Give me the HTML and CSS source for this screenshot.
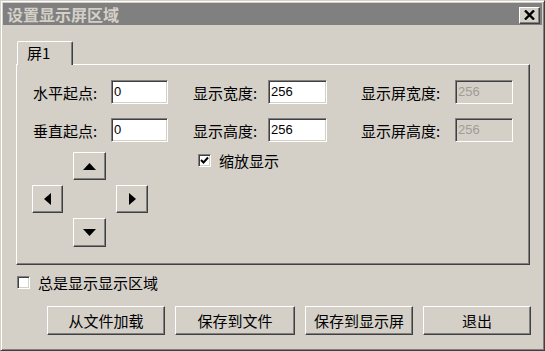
FILE: index.html
```html
<!DOCTYPE html>
<html lang="zh-CN">
<head>
<meta charset="utf-8">
<title>设置显示屏区域</title>
<link rel="stylesheet" href="styles.css">
</head>
<body>
<div class="window">
  <div class="titlebar">
    <span class="title">设置显示屏区域</span>
    <div class="close">
      <svg width="11" height="10" viewBox="0 0 11 10"><path d="M1 0.5 L10 9.5 M10 0.5 L1 9.5" stroke="#000" stroke-width="2.4" fill="none"/></svg>
    </div>
  </div>
  <div class="client">
    <div class="tabs"><div class="tab">屏1</div></div>
    <div class="panel">
      <div class="fields">
        <span class="lbl">水平起点:</span>
        <div class="edit w57">0</div>
        <span class="lbl">显示宽度:</span>
        <div class="edit w59">256</div>
        <span class="lbl">显示屏宽度:</span>
        <div class="edit w58 disabled">256</div>

        <span class="lbl">垂直起点:</span>
        <div class="edit w57">0</div>
        <span class="lbl">显示高度:</span>
        <div class="edit w59">256</div>
        <span class="lbl">显示屏高度:</span>
        <div class="edit w58 disabled">256</div>
      </div>
      <div class="lower">
        <div class="pad">
          <div class="btn arrow up"><svg width="13" height="7" viewBox="0 0 13 7"><polygon points="0,7 13,7 6.5,0" fill="#000"/></svg></div>
          <div class="btn arrow left"><svg width="7" height="12" viewBox="0 0 7 12"><polygon points="7,0 7,12 0,6" fill="#000"/></svg></div>
          <div class="btn arrow right"><svg width="7" height="12" viewBox="0 0 7 12"><polygon points="0,0 0,12 7,6" fill="#000"/></svg></div>
          <div class="btn arrow down"><svg width="13" height="7" viewBox="0 0 13 7"><polygon points="0,0 13,0 6.5,7" fill="#000"/></svg></div>
        </div>
        <div class="check zoom">
          <span class="box"><svg width="9" height="9" viewBox="0 0 9 9"><path d="M1 4 L3.5 6.5 L8 1.5" stroke="#000" stroke-width="2" fill="none"/></svg></span>
          <span class="ctext">缩放显示</span>
        </div>
      </div>
    </div>
    <div class="check always">
      <span class="box"></span>
      <span class="ctext">总是显示显示区域</span>
    </div>
    <div class="buttons">
      <div class="btn push b1">从文件加载</div>
      <div class="btn push b2">保存到文件</div>
      <div class="btn push b3">保存到显示屏</div>
      <div class="btn push b4">退出</div>
    </div>
  </div>
</div>
</body>
</html>
```
FILE: styles.css
```css
* { box-sizing: border-box; }
html, body { margin: 0; padding: 0; background: #d4d0c8; }
body {
  font-family: "Noto Sans CJK SC", "Liberation Sans", sans-serif;
  font-size: 15px;
  color: #000;
}
.window {
  width: 545px;
  height: 351px;
  background: #d4d0c8;
  border: 1px solid;
  border-color: #d4d0c8 #404040 #404040 #d4d0c8;
  box-shadow: inset 1px 1px #fff, inset -1px -1px #808080;
  padding: 2px;
}
.titlebar {
  height: 22px;
  background: #808080;
  display: flex;
  align-items: center;
  justify-content: space-between;
  padding-left: 4px;
  padding-right: 2px;
}
.title {
  font-weight: bold;
  font-size: 16px;
  line-height: 22px;
  color: #d4d0c8;
}
.close {
  width: 21px;
  height: 17px;
  margin-top: 2px;
  background: #d4d0c8;
  border: 1px solid;
  border-color: #fff #404040 #404040 #fff;
  box-shadow: inset -1px -1px #808080;
  display: flex;
  align-items: center;
  justify-content: center;
}
.client {
  padding-top: 16px;
  padding-left: 13px;
}
.tabs {
  display: flex;
  position: relative;
  z-index: 1;
}
.tab {
  margin-left: 1px;
  width: 56px;
  height: 24px;
  margin-bottom: -1px;
  background: #d4d0c8;
  border-top: 1px solid #fff;
  border-left: 1px solid #fff;
  border-right: 1px solid #404040;
  box-shadow: inset -1px 0 #808080;
  border-radius: 2px 2px 0 0;
  padding-left: 9px;
  line-height: 22px;
  font-size: 15px;
}
.panel {
  width: 514px;
  height: 201px;
  border: 1px solid;
  border-color: #fff #404040 #404040 #fff;
  box-shadow: inset -1px -1px #808080;
  padding: 15px 0 0 16px;
}
.fields {
  display: grid;
  grid-template-columns: 78px 82px 75px 93px 94px 58px;
  grid-auto-rows: 24px;
  row-gap: 14px;
  align-items: center;
}
.lbl {
  font-size: 15px;
  line-height: 17px;
  white-space: nowrap;
}
.edit {
  height: 24px;
  background: #fff;
  border: 1px solid;
  border-color: #808080 #fff #fff #808080;
  box-shadow: inset 1px 1px #404040, inset -1px -1px #d4d0c8;
  font-family: "Liberation Sans", "DejaVu Sans", sans-serif;
  font-size: 13px;
  line-height: 20px;
  padding-left: 2px;
  padding-top: 1px;
}
.w57 { width: 57px; }
.w59 { width: 59px; }
.w58 { width: 58px; }
.edit.disabled { background: #d4d0c8; color: #a09c96; }
.lower {
  display: flex;
  align-items: flex-start;
  margin-top: 10px;
}
.pad {
  display: grid;
  grid-template-columns: 31px 33px 32px;
  grid-template-rows: 28px 28px 29px;
  column-gap: 10px;
  row-gap: 5px;
  margin-left: -1px;
}
.btn {
  background: #d4d0c8;
  border: 1px solid;
  border-color: #fff #404040 #404040 #fff;
  box-shadow: inset -1px -1px #808080;
  display: flex;
  align-items: center;
  justify-content: center;
}
.arrow svg { display: block; }
.up { grid-column: 2; grid-row: 1; }
.left { grid-column: 1; grid-row: 2; }
.right { grid-column: 3; grid-row: 2; }
.down { grid-column: 2; grid-row: 3; }
.check {
  display: flex;
  align-items: center;
  gap: 8px;
}
.box {
  width: 13px;
  height: 13px;
  background: #fff;
  border: 1px solid;
  border-color: #808080 #fff #fff #808080;
  box-shadow: inset 1px 1px #404040, inset -1px -1px #d4d0c8;
  display: flex;
  align-items: center;
  justify-content: center;
}
.box svg { display: block; }
.ctext { font-size: 15px; line-height: 17px; }
.zoom { margin-left: 50px; margin-top: 0px; }
.always { margin-top: 9px; margin-left: 1px; }
.buttons {
  display: flex;
  margin-top: 15px;
  margin-left: 31px;
  gap: 10px;
}
.push {
  height: 29px;
  font-size: 15px;
}
.b1 { width: 118px; }
.b2 { width: 120px; }
.b3 { width: 108px; }
.b4 { width: 108px; }
```
